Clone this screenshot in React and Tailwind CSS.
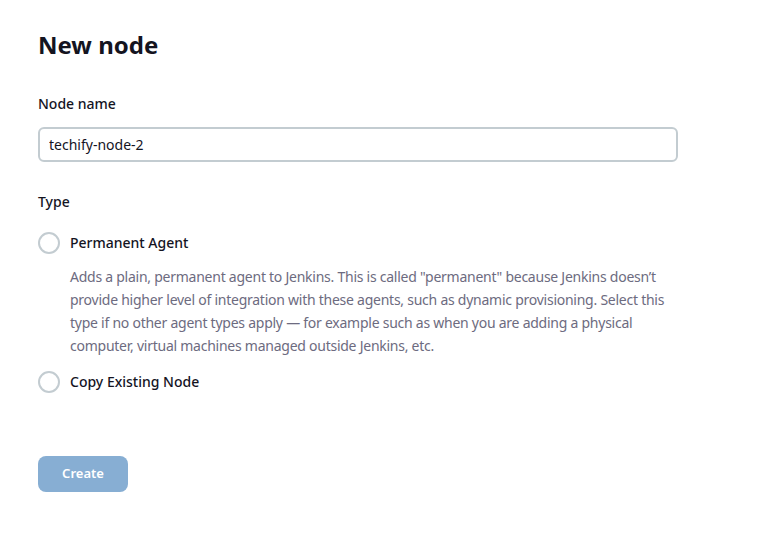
export default function App() {
  return (
    <div className="min-h-screen bg-white px-[38px] pt-[28px] font-['Noto_Sans',sans-serif] text-[#14141f]">
      <div className="w-[640px]">
        <h1 className="text-[24px] font-bold leading-[34px]">New node</h1>

        <label className="mt-[32px] block text-[14px] font-medium leading-[20px]">Node name</label>
        <input
          defaultValue="techify-node-2"
          className="mt-[13px] block h-[35px] w-full rounded-[6px] border-2 border-[#c3ccd1] px-[9px] text-[14px] text-[#14141f] outline-none"
        />

        <div className="mt-[30px] text-[14px] font-medium leading-[20px]">Type</div>

        <div className="mt-[20px] flex flex-col gap-[13px]">
          <div>
            <label className="flex items-center gap-[10px]">
              <span className="h-[22px] w-[22px] shrink-0 rounded-full border-2 border-[#c3ccd1] bg-white" />
              <span className="text-[14px] font-medium leading-[20px]">Permanent Agent</span>
            </label>
            <p className="mt-[10.5px] pl-[32px] text-[14px] leading-[23.3px] tracking-[-0.25px] text-[#6d6b80]">
              Adds a plain, permanent agent to Jenkins. This is called "permanent" because Jenkins doesn’t provide higher level of integration with these agents, such as dynamic provisioning. Select this type if no other agent types apply — for example such as when you are adding a physical computer, virtual machines managed outside Jenkins, etc.
            </p>
          </div>
          <label className="flex items-center gap-[10px]">
            <span className="h-[22px] w-[22px] shrink-0 rounded-full border-2 border-[#c3ccd1] bg-white" />
            <span className="text-[14px] font-medium leading-[20px]">Copy Existing Node</span>
          </label>
        </div>

        <button className="mt-[63px] h-[36px] w-[90px] rounded-[8px] bg-[#87aed3] text-[13px] font-semibold text-white">
          Create
        </button>
      </div>
    </div>
  );
}
